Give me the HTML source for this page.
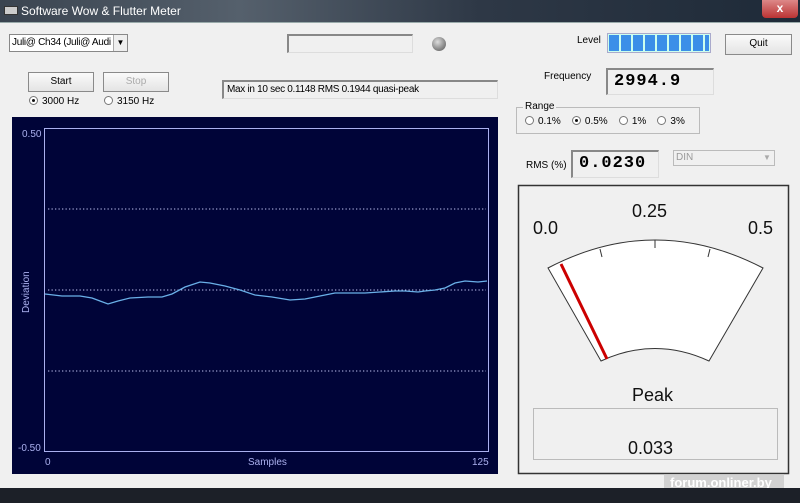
<!DOCTYPE html>
<html><head><meta charset="utf-8"><style>
*{margin:0;padding:0;box-sizing:border-box}
body{width:800px;height:503px;overflow:hidden;background:#1a1d24;font-family:"Liberation Sans",sans-serif;font-size:10px;color:#000;position:relative}
.a{position:absolute}
.title{left:0;top:0;width:800px;height:22px;background:linear-gradient(90deg,#3a4450,#55606c 30%,#2e3846 60%,#1e2a38);}
.client{left:0;top:22px;width:800px;height:466px;background:#f0f0f0;border-top:1px solid #9aa}
.btn{background:linear-gradient(#fafafa,#e4e4e4);border:1px solid #8a8a8a;text-align:center;line-height:18px}
.sunk{border-top:2px solid #888;border-left:2px solid #888;border-right:1px solid #ddd;border-bottom:1px solid #ddd;background:#f0f0f0}
.mono{font-family:"Liberation Mono",monospace;font-weight:bold;font-size:17px;letter-spacing:1px}
.rad{display:inline-block;width:9px;height:9px;border-radius:50%;border:1px solid #777;background:#fff;vertical-align:-1px;margin-right:4px;position:relative}
.rad.on::after{content:"";position:absolute;left:2px;top:2px;width:3px;height:3px;border-radius:50%;background:#111}
.n{letter-spacing:-0.3px}
</style></head><body>
<div class="a title"></div>
<div class="a" style="left:4px;top:6px;width:14px;height:9px;background:#ccc;border:1px solid #333"></div>
<div class="a" style="left:21px;top:4px;color:#fff;font-size:12px">Software Wow &amp; Flutter Meter</div>
<div class="a" style="left:762px;top:0;width:36px;height:18px;background:linear-gradient(#d88,#b33);border-radius:0 0 4px 4px;color:#fff;font-weight:bold;text-align:center;line-height:17px;font-size:12px">x</div>
<div class="a client"></div>

<div class="a n" style="left:9px;top:34px;width:119px;height:18px;background:#fff;border:1px solid #888;line-height:16px;padding-left:2px;overflow:hidden;white-space:nowrap">Juli@ Ch34 (Juli@ Audi</div>
<div class="a" style="left:113px;top:35px;width:14px;height:16px;background:#eee;border-left:1px solid #aaa;text-align:center;font-size:8px;line-height:16px">▼</div>

<div class="a sunk" style="left:287px;top:34px;width:126px;height:19px"></div>
<div class="a" style="left:432px;top:37px;width:14px;height:14px;border-radius:50%;background:radial-gradient(circle at 40% 35%,#ddd,#888 60%,#555)"></div>

<div class="a" style="left:577px;top:35px">Level</div>
<div class="a" style="left:607px;top:33px;width:104px;height:20px;background:#cfe;border:1px solid #aac;display:flex;gap:2px;padding:1px">
<div style="flex:1;background:#3b8fe8"></div><div style="flex:1;background:#3b8fe8"></div><div style="flex:1;background:#3b8fe8"></div><div style="flex:1;background:#3b8fe8"></div><div style="flex:1;background:#3b8fe8"></div><div style="flex:1;background:#3b8fe8"></div><div style="flex:1;background:#3b8fe8"></div><div style="flex:1;background:#3b8fe8"></div><div style="flex:0.4;background:#3b8fe8"></div></div>
<div class="a btn" style="left:725px;top:34px;width:67px;height:21px">Quit</div>

<div class="a btn" style="left:28px;top:72px;width:66px;height:20px">Start</div>
<div class="a btn" style="left:103px;top:72px;width:66px;height:20px;color:#aaa">Stop</div>
<div class="a" style="left:29px;top:96px"><span class="rad on"></span>3000 Hz</div>
<div class="a" style="left:104px;top:96px"><span class="rad"></span>3150 Hz</div>
<div class="a sunk n" style="left:222px;top:80px;width:276px;height:19px;padding-left:3px;line-height:16px">Max in 10 sec 0.1148 RMS 0.1944 quasi-peak</div>

<div class="a" style="left:544px;top:71px">Frequency</div>
<div class="a sunk mono" style="left:606px;top:68px;width:108px;height:27px;padding-left:6px;line-height:23px">2994.9</div>

<div class="a" style="left:516px;top:107px;width:184px;height:27px;border:1px solid #bbb"></div>
<div class="a" style="left:523px;top:101px;background:#f0f0f0;padding:0 2px">Range</div>
<div class="a" style="left:525px;top:116px;white-space:nowrap"><span class="rad"></span>0.1% &nbsp;&nbsp;&nbsp;<span class="rad on"></span>0.5% &nbsp;&nbsp;&nbsp;<span class="rad"></span>1% &nbsp;&nbsp;&nbsp;<span class="rad"></span>3%</div>

<div class="a" style="left:526px;top:160px">RMS (%)</div>
<div class="a sunk mono" style="left:571px;top:150px;width:88px;height:28px;padding-left:6px;line-height:24px">0.0230</div>
<div class="a" style="left:673px;top:150px;width:102px;height:16px;border:1px solid #bbb;color:#999;padding-left:2px;line-height:14px">DIN</div>
<div class="a" style="left:760px;top:151px;width:14px;height:14px;color:#aaa;font-size:8px;text-align:center;line-height:14px">▼</div>

<div class="a" style="left:12px;top:117px;width:486px;height:357px;background:#000438"></div>
<svg class="a" style="left:0;top:0" width="800" height="503">
<rect x="44.5" y="128.5" width="444" height="323" fill="none" stroke="#aab0ee" stroke-width="1"/>
<g stroke="#c0c4f0" stroke-dasharray="1.3,2.2" stroke-width="1"><line x1="48" y1="209" x2="486" y2="209"/><line x1="48" y1="290" x2="486" y2="290"/><line x1="48" y1="371" x2="486" y2="371"/></g>
<polyline fill="none" stroke="#6ab0e8" stroke-width="1.3" points="45,294 62,296 80,296 92,298 100,301 108,304 118,301 130,298 148,297 162,297 172,294 185,287 200,282 210,283 225,286 240,290 255,295 272,297 290,300 305,299 320,296 335,293 350,293 365,293 380,292 395,291 405,291 418,292 425,291 435,290 445,288 455,283 465,281 478,282 487,281"/>
<g fill="#aab0ee" font-family="Liberation Sans" font-size="10"><text x="22" y="137">0.50</text><text x="18" y="451">-0.50</text><text x="45" y="465">0</text><text x="248" y="465">Samples</text><text x="472" y="465">125</text>
<text transform="translate(29,313) rotate(-90)">Deviation</text></g>
<rect x="518.5" y="185.5" width="270" height="288" fill="#f0f0f0" stroke="#333" stroke-width="1.5"/>
<path d="M548,268 Q655,212 763,268 L709,361 Q655,336 601,361 Z" fill="#fff" stroke="#333" stroke-width="1"/>
<g stroke="#333" stroke-width="1"><line x1="600" y1="249" x2="602" y2="257"/><line x1="655" y1="240" x2="655" y2="248"/><line x1="710" y1="249" x2="708" y2="257"/></g>
<line x1="561" y1="264" x2="607" y2="359" stroke="#c00" stroke-width="3"/>
<g font-family="Liberation Sans" font-size="18" fill="#111"><text x="533" y="234">0.0</text><text x="632" y="217">0.25</text><text x="748" y="234">0.5</text><text x="632" y="401">Peak</text><text x="628" y="454">0.033</text></g>
<rect x="533.5" y="408.5" width="244" height="51" fill="none" stroke="#bbb"/>
</svg>
<div class="a" style="left:664px;top:474px;width:120px;height:20px;background:rgba(200,200,200,0.75)"></div>
<div class="a" style="left:670px;top:475px;color:#fff;font-weight:bold;font-size:13px">forum.onliner.by</div>
<div class="a" style="left:0;top:488px;width:800px;height:15px;background:#1c2028"></div>
</body></html>
